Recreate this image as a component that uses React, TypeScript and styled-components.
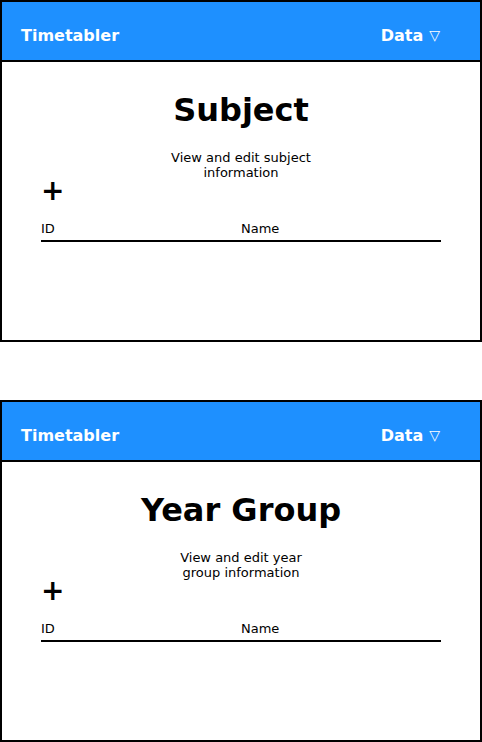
import React from 'react'
import styled, { createGlobalStyle } from 'styled-components'

const GlobalStyle = createGlobalStyle`
  html, body {
    margin: 0;
    padding: 0;
    background: #ffffff;
  }
  body {
    font-family: "DejaVu Sans", "Noto Sans", sans-serif;
    color: #000000;
  }
`

const Page = styled.div`
  display: flex;
  flex-direction: column;
  gap: 58px;
  width: 482px;
`

const Frame = styled.section`
  box-sizing: border-box;
  width: 482px;
  height: 342px;
  border: 2px solid #000000;
  display: flex;
  flex-direction: column;
  background: #ffffff;
`

const Header = styled.header`
  box-sizing: border-box;
  height: 60px;
  border-bottom: 2px solid #000000;
  background: #1e90ff;
  display: flex;
  align-items: center;
  justify-content: space-between;
  padding: 8px 40px 0 19px;
  color: #ffffff;
  font-weight: bold;
  font-size: 16px;
`

const Brand = styled.span`
  line-height: 19px;
`

const Menu = styled.span`
  display: flex;
  align-items: center;
  gap: 6px;
  line-height: 19px;
`

const Caret = styled.span`
  font-weight: normal;
  font-size: 14px;
`

const Body = styled.div`
  display: flex;
  flex-direction: column;
  padding: 30px 39px 0 39px;
`

const Title = styled.h1`
  margin: 0;
  text-align: center;
  font-size: 32px;
  font-weight: bold;
  line-height: 37px;
`

const Subtitle = styled.p`
  margin: 21px auto 0 auto;
  width: 150px;
  text-align: center;
  font-size: 13px;
  line-height: 15px;
`

const AddButton = styled.div`
  margin-top: 1px;
  font-size: 28px;
  font-weight: bold;
  line-height: 20px;
  width: 24px;
`

const HeadRow = styled.div`
  display: grid;
  grid-template-columns: 1fr 1fr;
  margin-top: 20px;
  padding-bottom: 4px;
  border-bottom: 2px solid #000000;
  font-size: 13px;
  line-height: 15px;
`

type PanelProps = { title: string; description: string }

const Panel = ({ title, description }: PanelProps) => (
  <Frame>
    <Header>
      <Brand>Timetabler</Brand>
      <Menu>
        Data <Caret>▽</Caret>
      </Menu>
    </Header>
    <Body>
      <Title>{title}</Title>
      <Subtitle>{description}</Subtitle>
      <AddButton>+</AddButton>
      <HeadRow>
        <span>ID</span>
        <span>Name</span>
      </HeadRow>
    </Body>
  </Frame>
)

export default () => (
  <Page>
    <GlobalStyle />
    <Panel title='Subject' description='View and edit subject information' />
    <Panel title='Year Group' description='View and edit year group information' />
  </Page>
)
